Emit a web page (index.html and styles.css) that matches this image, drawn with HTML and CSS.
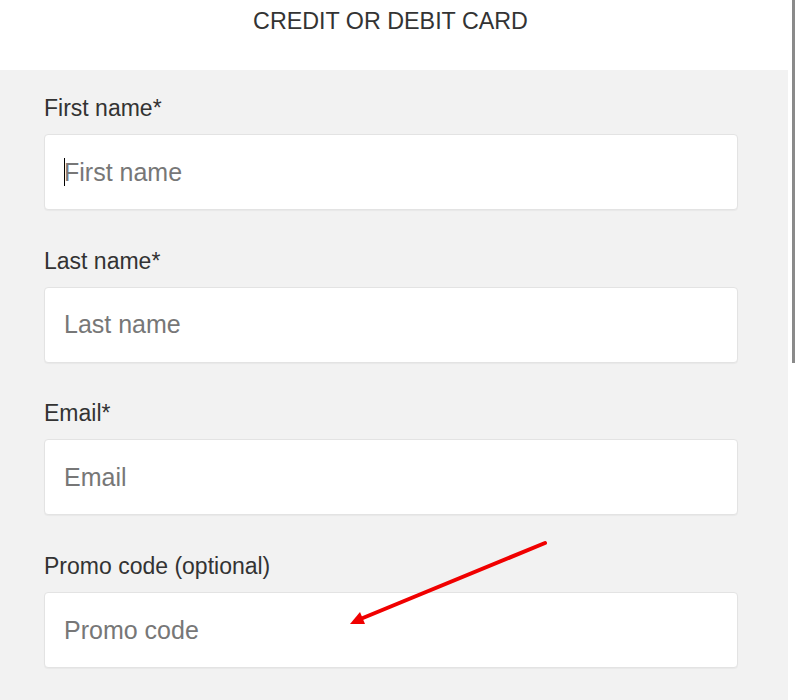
FILE: index.html
```html
<!DOCTYPE html>
<html lang="en">
<head>
<meta charset="utf-8">
<title>Credit or debit card</title>
<link rel="stylesheet" href="styles.css">
</head>
<body>
<div class="page">
  <header class="header">
    <h1 class="title">CREDIT OR DEBIT CARD</h1>
  </header>
  <main class="form">
    <div class="field">
      <label class="label" for="fn">First name*</label>
      <div class="input-wrap">
        <input class="input" id="fn" type="text" placeholder="First name">
        <span class="caret"></span>
      </div>
    </div>
    <div class="field">
      <label class="label" for="ln">Last name*</label>
      <div class="input-wrap">
        <input class="input" id="ln" type="text" placeholder="Last name">
      </div>
    </div>
    <div class="field">
      <label class="label" for="em">Email*</label>
      <div class="input-wrap">
        <input class="input" id="em" type="text" placeholder="Email">
      </div>
    </div>
    <div class="field">
      <label class="label" for="pc">Promo code (optional)</label>
      <div class="input-wrap">
        <input class="input" id="pc" type="text" placeholder="Promo code">
      </div>
    </div>
  </main>
  <div class="scrollbar"><div class="thumb"></div></div>
  <svg class="arrow" width="795" height="700" viewBox="0 0 795 700">
    <line x1="545" y1="543" x2="358" y2="620" stroke="#f00000" stroke-width="4" stroke-linecap="round"/>
    <polygon points="350,624 360,612 365,624" fill="#f00000"/>
  </svg>
</div>
</body>
</html>
```
FILE: styles.css
```css
* { box-sizing: border-box; }
html, body {
  margin: 0;
  padding: 0;
  background: #ffffff;
  font-family: "Liberation Sans", Arial, sans-serif;
  overflow: hidden;
}
.page {
  position: relative;
  width: 795px;
  height: 700px;
}
.header {
  width: 788px;
  height: 70px;
  background: #ffffff;
  padding: 8px 7px 0 0;
}
.title {
  margin: 0;
  text-align: center;
  font-size: 23.3px;
  font-weight: normal;
  color: #333333;
  line-height: 26px;
}
.form {
  width: 788px;
  height: 630px;
  background: #f2f2f2;
  padding: 26px 50px 0 44px;
  display: flex;
  flex-direction: column;
  gap: 38.7px;
}
.field {
  display: flex;
  flex-direction: column;
  gap: 13px;
}
.label {
  font-size: 23px;
  line-height: 25px;
  color: #333333;
}
.input-wrap {
  position: relative;
}
.input {
  display: block;
  width: 694px;
  height: 76px;
  border: 1px solid #e3e3e3;
  border-radius: 4px;
  background: #ffffff;
  padding: 0 19px;
  font-family: "Liberation Sans", Arial, sans-serif;
  font-size: 25px;
  color: #333333;
  outline: none;
  box-shadow: 0 1px 1px rgba(0,0,0,0.04);
}
.input::placeholder {
  color: #777777;
  opacity: 1;
}
.caret {
  position: absolute;
  left: 20px;
  top: 24px;
  width: 1px;
  height: 28px;
  background: #000000;
}
.scrollbar {
  position: absolute;
  top: 0;
  right: 0;
  width: 7px;
  height: 700px;
  background: #ffffff;
}
.thumb {
  margin-left: 4px;
  width: 3px;
  height: 363px;
  background: #8a8a8a;
}
.arrow {
  position: absolute;
  left: 0;
  top: 0;
  pointer-events: none;
}
```
